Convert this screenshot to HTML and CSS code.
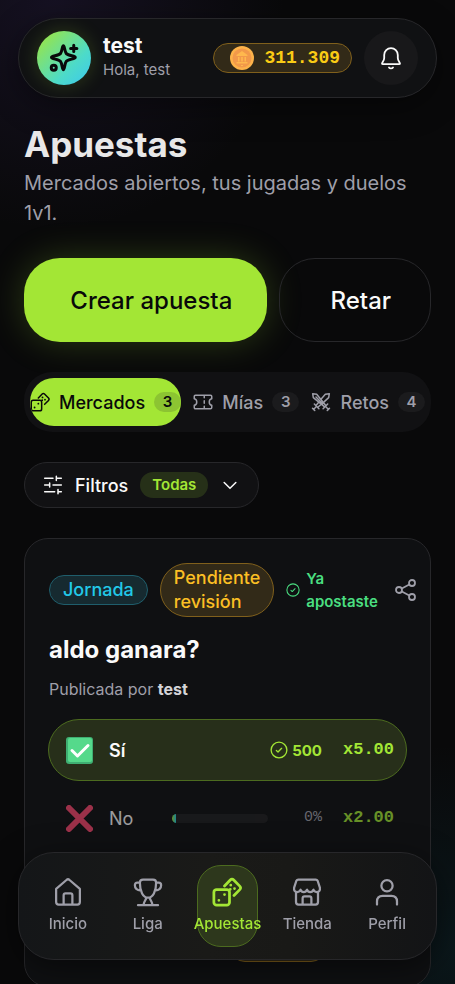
FILE: index.html
```html
<!DOCTYPE html>
<html lang="es">
<head>
<meta charset="utf-8">
<meta name="viewport" content="width=device-width, initial-scale=1">
<title>Apuestas</title>
<link rel="stylesheet" href="styles.css">
</head>
<body>
<svg class="sprite" aria-hidden="true">
  <symbol id="dice" viewBox="0 0 24 24">
    <rect x="1.5" y="10" width="12.5" height="12.5" rx="2.2"/>
    <path d="M10 7.2 14.6 2.4q1.4-1.4 2.8 0L22.2 7.3q1.3 1.4 0 2.8L17.6 14.8"/>
    <path class="dot" d="M5.5 18.6h.01M10 14h.01M15 6.5h.01M18 9.2h.01M14.6 9.8h.01"/>
  </symbol>
  <symbol id="check" viewBox="0 0 24 24">
    <circle cx="12" cy="12" r="10.5"/>
    <path d="m8.5 12.6 2.2 2 4.8-4.8"/>
  </symbol>
</svg>
<div class="app">
  <header class="topbar">
    <span class="avatar">
      <svg class="icon avatar-icon" viewBox="0 0 24 24" aria-hidden="true">
        <path d="M11.5 2.2c1 0 .9 4.300 2.300 6.200 1.500 2 7.200 1.700 7.200 3.100s-5.700 1.300-7.200 3.200c-1.400 1.900-1.300 6.600-2.300 6.600s-.9-4.700-2.300-6.600C7.700 12.800 2 12.900 2 11.500s5.700-1.100 7.200-3.100C10.600 6.500 10.500 2.200 11.500 2.200Z"/>
        <path d="M19.800 1.800v5M17.300 4.300h5"/>
        <circle cx="3.800" cy="19.800" r="2"/>
      </svg>
    </span>
    <div class="who">
      <strong class="who-name">test</strong>
      <span class="who-hello">Hola, test</span>
    </div>
    <div class="coins">
      <svg class="coin" viewBox="0 0 24 24" aria-hidden="true">
        <circle cx="12" cy="12" r="12" fill="#fdb34a"/>
        <circle cx="12" cy="12" r="9.500" fill="#f2994a"/>
        <path d="M6.500 9 12 5l5.500 4v1h-11ZM8 11h1.500v4.500H8ZM11.200 11h1.600v4.500h-1.600ZM14.500 11H16v4.500h-1.500ZM6.500 16h11v1.500h-11ZM11 19h2v1h-2Z" fill="#ffb84d"/>
      </svg>
      <span>311.309</span>
    </div>
    <button class="bell" type="button" aria-label="Notificaciones">
      <svg class="icon icon-24" viewBox="0 0 24 24" aria-hidden="true">
        <path d="M3 17.500c0-1.200 2.200-2.400 2.200-5.500V9a6.800 6.800 0 0 1 13.600 0v3c0 3.100 2.200 4.300 2.200 5.500 0 .5-.4.700-1 .7H4c-.6 0-1-.2-1-.7ZM10 21.500c.8 1.200 3.200 1.200 4 0"/>
      </svg>
    </button>
  </header>

  <main class="page">
    <div class="intro">
      <h1>Apuestas</h1>
      <p>Mercados abiertos, tus jugadas y duelos 1v1.</p>
    </div>

    <div class="actions">
      <button class="action action-primary" type="button">Crear apuesta</button>
      <button class="action action-outline" type="button">Retar</button>
    </div>

    <div class="tabs" role="tablist">
      <button class="tab tab-active" type="button" role="tab" aria-selected="true">
        <svg class="icon icon-20" aria-hidden="true"><use href="#dice"/></svg>
        Mercados <span class="count">3</span>
      </button>
      <button class="tab" type="button" role="tab" aria-selected="false">
        <svg class="icon icon-20" viewBox="0 0 24 24" aria-hidden="true">
          <path d="M1.500 5.500q0-1.500 1.500-1.500h18q1.500 0 1.500 1.500v2.500c-4 .5-4 7.500 0 8v2.500q0 1.500-1.500 1.500H3q-1.500 0-1.500-1.500V16c4-.5 4-7.500 0-8ZM13.500 4v3M13.500 10.500v3M13.500 17v3"/>
        </svg>
        Mías <span class="count">3</span>
      </button>
      <button class="tab" type="button" role="tab" aria-selected="false">
        <svg class="icon icon-20" viewBox="0 0 24 24" aria-hidden="true">
          <path d="m4 14.500 5.500 5.500M6.500 17.500 3 21M1.800 19.500l2.700 2.700M20 14.500 14.500 20M17.500 17.500 21 21M22.200 19.500l-2.700 2.700"/>
          <path d="M17.500 16 6.800 2.800 2 2l.8 4.800L16 17.500M6 6l8 8M12.500 8 17.200 2.800 22 2l-.8 4.800L16 11.500M9.500 12 6.500 15.500M8.500 18l3.500-3"/>
        </svg>
        Retos <span class="count">4</span>
      </button>
    </div>

    <button class="filters" type="button" aria-expanded="false">
      <svg class="icon icon-20" viewBox="0 0 24 24" aria-hidden="true">
        <path d="M2 4h10M16 4h6M16 1.500v5M2 12h6M8 9.500v5M12 12h10M2 20h12M18 20h4M18 17.500v5"/>
      </svg>
      Filtros
      <span class="filter-value">Todas</span>
      <svg class="icon icon-20" viewBox="0 0 24 24" aria-hidden="true"><path d="m5 9 7 7 7-7"/></svg>
    </button>

    <article class="card">
      <div class="card-top">
        <span class="badge badge-cyan">Jornada</span>
        <span class="badge badge-amber">Pendiente revisión</span>
        <span class="placed">
          <svg class="icon icon-14" aria-hidden="true"><use href="#check"/></svg>
          Ya apostaste
        </span>
        <button class="share" type="button" aria-label="Compartir">
          <svg class="icon icon-24" viewBox="0 0 24 24" aria-hidden="true">
            <circle cx="5" cy="12" r="3"/><circle cx="18" cy="5" r="3"/><circle cx="18" cy="19" r="3"/>
            <path d="m7.800 10.500 7.500-4M7.800 13.500l7.500 4"/>
          </svg>
        </button>
      </div>
      <h2>aldo ganara?</h2>
      <p class="author">Publicada por <strong>test</strong></p>
      <ul class="options">
        <li class="option option-picked">
          <svg class="mark" viewBox="0 0 27 27" aria-hidden="true">
            <rect width="27" height="27" rx="3" fill="#3fae72"/>
            <rect x="2" y="1" width="24" height="24" rx="2" fill="#55d98b"/>
            <path d="m6 13.500 5.500 5.500L22 8.500" fill="none" stroke="#fff" stroke-width="3" stroke-linecap="round" stroke-linejoin="round"/>
          </svg>
          <span class="option-name">Sí</span>
          <span class="stake"><svg class="icon icon-18" aria-hidden="true"><use href="#check"/></svg>500</span>
          <span class="odds">x5.00</span>
        </li>
        <li class="option option-dim">
          <svg class="mark" viewBox="0 0 27 27" aria-hidden="true">
            <path d="m3 3 21 21M24 3 3 24" fill="none" stroke="#f8476f" stroke-width="6" stroke-linecap="round"/>
          </svg>
          <span class="option-name">No</span>
          <span class="meter"><span class="meter-fill"></span></span>
          <span class="share-pct">0%</span>
          <span class="odds">x2.00</span>
        </li>
      </ul>
      <div class="card-foot"><span class="badge badge-amber foot-badge"></span></div>
    </article>
  </main>

  <nav class="dock" aria-label="Principal">
    <a class="dock-item" href="#inicio">
      <svg class="icon icon-30" viewBox="0 0 24 24" aria-hidden="true">
        <path d="M2.500 9.500 11 2.200q1-.8 2 0l8.500 7.300V20q0 2-2 2h-15q-2 0-2-2ZM8.500 22v-7.500q0-1.500 1.500-1.500h4q1.500 0 1.500 1.500V22"/>
      </svg>
      Inicio
    </a>
    <a class="dock-item" href="#liga">
      <svg class="icon icon-30" viewBox="0 0 24 24" aria-hidden="true">
        <path d="M5.500 4.500Q5.500 2 8 2h8q2.500 0 2.500 2.500c0 7-2.500 12-6.500 12s-6.500-5-6.500-12ZM5.500 4.500h-2Q1.500 4.500 1.500 6.500c0 3 2 4 5 4.500M18.500 4.500h2q2 0 2 2c0 3-2 4-5 4.500M10.500 16.500c0 2-1.500 2.500-2 5.500M13.500 16.500c0 2 1.500 2.500 2 5.500M4 22.500h16"/>
      </svg>
      Liga
    </a>
    <a class="dock-item dock-active" href="#apuestas" aria-current="page">
      <svg class="icon icon-30" aria-hidden="true"><use href="#dice"/></svg>
      Apuestas
    </a>
    <a class="dock-item" href="#tienda">
      <svg class="icon icon-30" viewBox="0 0 24 24" aria-hidden="true">
        <path d="M3.200 12v8q0 2 2 2h13.600q2 0 2-2v-8M5 2h14q1 0 1.500 1l1.800 5.500q.5 3.500-2.500 3.500-2 0-2.600-1.800-.7 1.800-2.600 1.800T12 10.200q-.7 1.800-2.600 1.800t-2.600-1.800Q6.200 12 4.200 12q-3 0-2.500-3.500L3.500 3Q4 2 5 2ZM8.500 22v-5q0-1.500 1.500-1.500h4q1.500 0 1.500 1.500v5"/>
      </svg>
      Tienda
    </a>
    <a class="dock-item" href="#perfil">
      <svg class="icon icon-30" viewBox="0 0 24 24" aria-hidden="true">
        <circle cx="12" cy="7" r="4.500"/><path d="M4 22v-2.500Q4 15 8.500 15h7q4.500 0 4.500 4.500V22"/>
      </svg>
      Perfil
    </a>
  </nav>
</div>
</body>
</html>
```
FILE: styles.css
```css
:root {
  --lime: #a3e635;
  --amber: #fbbf24;
  --muted: #9f9fa9;
  --line: #27272a;
  --mono: "Liberation Mono", monospace;
}

* { box-sizing: border-box; }

body {
  margin: 0;
  background: #09090a;
  color: #fafafa;
  font-family: Inter, "Liberation Sans", sans-serif;
  font-size: 18px;
}

h1, h2, p, ul { margin: 0; padding: 0; }
button { font: inherit; color: inherit; border: 0; background: none; padding: 0; cursor: pointer; }
a { color: inherit; text-decoration: none; }

.sprite { position: absolute; width: 0; height: 0; }

.icon {
  flex: none;
  fill: none;
  stroke: currentColor;
  stroke-width: 1.8;
  stroke-linecap: round;
  stroke-linejoin: round;
}
.icon-14 { width: 14px; height: 14px; }
.icon-18 { width: 18px; height: 18px; }
.icon-20 { width: 20px; height: 20px; }
.icon-24 { width: 24px; height: 24px; }
.icon-30 { width: 30px; height: 30px; }

.app {
  height: 100vh;
  overflow: hidden;
  background:
    radial-gradient(circle at 12% 0, rgba(88, 60, 160, 0.16), transparent 230px),
    radial-gradient(circle at 100% 96%, rgba(20, 110, 130, 0.14), transparent 200px);
}

.topbar {
  display: flex;
  align-items: center;
  gap: 12px;
  height: 80px;
  margin: 18px 18px 0;
  padding: 0 18px;
  border: 1px solid var(--line);
  border-radius: 40px;
  background: #101113;
  box-shadow: 0 8px 32px rgba(0, 0, 0, 0.4);
}
.avatar {
  display: grid;
  place-items: center;
  width: 54px;
  height: 54px;
  border-radius: 50%;
  background: linear-gradient(135deg, #a3e635, #4ddbc8 65%, #3cc8f0);
  color: #09090a;
  box-shadow: 0 0 20px rgba(163, 230, 53, 0.2);
}
.avatar-icon { width: 30px; height: 30px; stroke-width: 2.4; }
.who { display: grid; flex: 1; line-height: 24px; }
.who-name { font-size: 21px; }
.who-hello { font-size: 15px; color: var(--muted); }
.coins {
  display: flex;
  align-items: center;
  gap: 10px;
  height: 30px;
  padding: 0 11px 0 16px;
  border: 1px solid #80601c;
  border-radius: 15px;
  background: #322a18;
  color: #facc15;
  font: bold 18px/28px var(--mono);
}
.coin { width: 24px; height: 24px; }
.bell {
  display: grid;
  place-items: center;
  width: 54px;
  height: 54px;
  border-radius: 50%;
  background: #18181a;
}

.page { display: grid; gap: 30px; padding: 24px 24px 0; justify-items: stretch; }
.intro h1 {
  font-size: 35px;
  line-height: 44px;
  color: #e8e8e8;
}
.intro p { font-size: 20px; line-height: 30px; color: var(--muted); padding-top: 2px; }

.actions { display: flex; gap: 12px; }
.action {
  height: 84px;
  padding-left: 12px;
  border-radius: 36px;
  font-size: 24px;
  font-weight: 500;
}
.action-primary {
  flex: 5 1 0;
  background: var(--lime);
  color: #09090a;
  box-shadow: 0 0 36px rgba(163, 230, 53, 0.22);
}
.action-outline { flex: 3 1 0; border: 1px solid var(--line); }

.tabs {
  display: flex;
  justify-content: space-between;
  gap: 8px;
  padding: 6px;
  border-radius: 28px;
  background: #111113;
}
.tab {
  display: flex;
  align-items: center;
  gap: 9px;
  height: 48px;
  border-radius: 24px;
  color: var(--muted);
  font-weight: 500;
  font-size: 18px;
}
.tab-active { background: var(--lime); color: #09090a; overflow: hidden; }
.count {
  width: 27px;
  border-radius: 10px;
  background: #1b1b1d;
  font-size: 15px;
  font-weight: 600;
  line-height: 20px;
  text-align: center;
}
.tab-active .count { background: #8cc432; }

.filters {
  display: flex;
  align-items: center;
  justify-self: start;
  gap: 12px;
  height: 46px;
  padding: 0 18px;
  border: 1px solid var(--line);
  border-radius: 23px;
  background: #111113;
  font-weight: 500;
}
.filter-value {
  padding: 0 12px;
  border-radius: 13px;
  background: #263018;
  color: var(--lime);
  font-size: 15px;
  font-weight: 600;
  line-height: 26px;
}

.card {
  padding: 24px;
  border: 1px solid var(--line);
  border-radius: 24px;
  background: #0f1012;
}
.card-top { display: flex; align-items: center; gap: 12px; }
.badge {
  flex: none;
  padding: 2px 13px;
  border: 1px solid;
  border-radius: 27px;
  font-size: 18px;
  font-weight: 500;
  line-height: 24px;
}
.badge-cyan { border-color: #1f5e6c; background: #162a30; color: #22c8e8; }
.badge-amber { width: min-content; border-color: #80601c; background: #322a18; color: var(--amber); }
.placed {
  display: flex;
  align-items: center;
  gap: 6px;
  width: min-content;
  color: #4ade80;
  font-size: 15px;
  font-weight: 600;
  line-height: 23px;
}
.share { margin: 0 -12px 0 auto; color: var(--muted); line-height: 0; }
.card h2 { margin-top: 18px; font-size: 24px; line-height: 30px; }
.author { margin-top: 12px; font-size: 16px; line-height: 24px; color: var(--muted); }
.author strong { color: #d4d4d8; }

.options { display: grid; gap: 6px; margin: 18px -1px 0; list-style: none; }
.option {
  display: flex;
  align-items: center;
  height: 62px;
  padding: 0 12px 0 17px;
  border: 1px solid transparent;
  border-radius: 31px;
}
.option-picked { border-color: #4c6b1f; background: #272f1a; }
.option-picked .option-name { font-weight: 600; }
.option-dim > * { opacity: 0.6; }
.mark { width: 27px; height: 27px; flex: none; margin-right: 16px; }
.option-name { width: 63px; }
.stake {
  display: flex;
  align-items: center;
  gap: 4px;
  margin-left: auto;
  color: var(--lime);
  font-size: 15px;
  font-weight: 700;
}
.odds { width: 72px; text-align: right; color: var(--lime); font: bold 17px/24px var(--mono); }
.meter { flex: 1; height: 9px; border-radius: 5px; background: #1f1f22; overflow: hidden; }
.meter-fill { display: block; width: 4px; height: 9px; background: linear-gradient(90deg, var(--lime), #22d3ee); }
.share-pct { width: 54px; text-align: right; color: var(--muted); font: 15px/24px var(--mono); }
.card-foot { display: flex; justify-content: center; padding-top: 83px; }
.foot-badge { width: 96px; height: 30px; margin-left: 100px; }

.dock {
  position: fixed;
  left: 18px;
  right: 18px;
  bottom: 24px;
  display: flex;
  justify-content: space-around;
  padding: 12px 9px;
  border: 1px solid var(--line);
  border-radius: 36px;
  background: linear-gradient(90deg, #141618, #1a1a18 45%, #191917 65%, #131416);
  box-shadow: 0 8px 32px rgba(0, 0, 0, 0.5);
}
.dock-item {
  display: flex;
  flex-direction: column;
  align-items: center;
  justify-content: center;
  gap: 5px;
  width: 61px;
  height: 82px;
  border: 1px solid transparent;
  border-radius: 24px;
  color: var(--muted);
  font-size: 15px;
  font-weight: 500;
  line-height: 24px;
}
.dock-active { border-color: #4c6b1f; background: #2d371c; color: var(--lime); }
.dock-active .icon { stroke-width: 2.2; }
.dot { stroke-width: 2.2; }
```
